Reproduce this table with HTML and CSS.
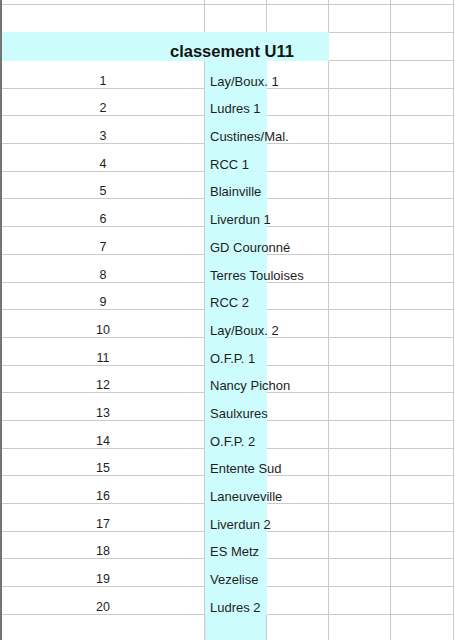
FILE: index.html
```html
<!DOCTYPE html>
<html lang="fr">
<head>
<meta charset="utf-8">
<title>classement U11</title>
<link rel="stylesheet" href="styles.css">
</head>
<body>
<div class="sheet">
  <div class="row r-top"><div class="c"></div><div class="c"></div><div class="c"></div><div class="c"></div><div class="c"></div></div>
  <div class="row r-blank"><div class="c"></div><div class="c"></div><div class="c"></div><div class="c"></div><div class="c"></div></div>
  <div class="row r-head"><div class="c title">classement U11</div><div class="c"></div><div class="c"></div></div>
  <div class="row r-data"><div class="c num">1</div><div class="c team">Lay/Boux. 1</div><div class="c"></div><div class="c"></div><div class="c"></div></div>
  <div class="row r-data"><div class="c num">2</div><div class="c team">Ludres 1</div><div class="c"></div><div class="c"></div><div class="c"></div></div>
  <div class="row r-data"><div class="c num">3</div><div class="c team">Custines/Mal.</div><div class="c"></div><div class="c"></div><div class="c"></div></div>
  <div class="row r-data"><div class="c num">4</div><div class="c team">RCC 1</div><div class="c"></div><div class="c"></div><div class="c"></div></div>
  <div class="row r-data"><div class="c num">5</div><div class="c team">Blainville</div><div class="c"></div><div class="c"></div><div class="c"></div></div>
  <div class="row r-data"><div class="c num">6</div><div class="c team">Liverdun 1</div><div class="c"></div><div class="c"></div><div class="c"></div></div>
  <div class="row r-data"><div class="c num">7</div><div class="c team">GD Couronné</div><div class="c"></div><div class="c"></div><div class="c"></div></div>
  <div class="row r-data"><div class="c num">8</div><div class="c team">Terres Touloises</div><div class="c"></div><div class="c"></div><div class="c"></div></div>
  <div class="row r-data"><div class="c num">9</div><div class="c team">RCC 2</div><div class="c"></div><div class="c"></div><div class="c"></div></div>
  <div class="row r-data"><div class="c num">10</div><div class="c team">Lay/Boux. 2</div><div class="c"></div><div class="c"></div><div class="c"></div></div>
  <div class="row r-data"><div class="c num">11</div><div class="c team">O.F.P. 1</div><div class="c"></div><div class="c"></div><div class="c"></div></div>
  <div class="row r-data"><div class="c num">12</div><div class="c team">Nancy Pichon</div><div class="c"></div><div class="c"></div><div class="c"></div></div>
  <div class="row r-data"><div class="c num">13</div><div class="c team">Saulxures</div><div class="c"></div><div class="c"></div><div class="c"></div></div>
  <div class="row r-data"><div class="c num">14</div><div class="c team">O.F.P. 2</div><div class="c"></div><div class="c"></div><div class="c"></div></div>
  <div class="row r-data"><div class="c num">15</div><div class="c team">Entente Sud</div><div class="c"></div><div class="c"></div><div class="c"></div></div>
  <div class="row r-data"><div class="c num">16</div><div class="c team">Laneuveville</div><div class="c"></div><div class="c"></div><div class="c"></div></div>
  <div class="row r-data"><div class="c num">17</div><div class="c team">Liverdun 2</div><div class="c"></div><div class="c"></div><div class="c"></div></div>
  <div class="row r-data"><div class="c num">18</div><div class="c team">ES Metz</div><div class="c"></div><div class="c"></div><div class="c"></div></div>
  <div class="row r-data"><div class="c num">19</div><div class="c team">Vezelise</div><div class="c"></div><div class="c"></div><div class="c"></div></div>
  <div class="row r-data"><div class="c num">20</div><div class="c team">Ludres 2</div><div class="c"></div><div class="c"></div><div class="c"></div></div>
  <div class="row r-last"><div class="c"></div><div class="c team empty"></div><div class="c"></div><div class="c"></div><div class="c"></div></div>
</div>
</body>
</html>
```

FILE: styles.css
```css
html, body {
  margin: 0;
  padding: 0;
  background: #ffffff;
}

body {
  font-family: "Liberation Sans", Arial, sans-serif;
  color: #1e1e1e;
  overflow: hidden;
}

.sheet {
  width: 454px;
  height: 640px;
  border-left: 2px solid #747474;
  box-sizing: border-box;
  overflow: hidden;
}

.row {
  display: grid;
  grid-template-columns: 203px 62px 62px 62px 63px;
}

.c {
  box-sizing: border-box;
  border-right: 1px solid #cbcbcb;
  border-bottom: 1px solid #cbcbcb;
  display: flex;
  align-items: flex-end;
  font-size: 12.5px;
  line-height: 13px;
  padding-bottom: 0;
  white-space: nowrap;
  min-width: 0;
}

.r-top { height: 5px; }
.r-blank { height: 28px; }
.r-head { height: 28px; }
.r-data { height: 27.7px; }
.r-last { height: 40px; }

.title {
  grid-column: span 3;
  background: #ccfcfc;
  border-right-color: #ccfcfc;
  border-bottom-color: #ccfcfc;
  margin-top: -1px;
  font-weight: bold;
  font-size: 16.5px;
  line-height: 18px;
  padding-left: 168px;
  padding-bottom: 0;
  color: #141414;
}

.num {
  justify-content: center;
}

.team {
  background: #ccfcfc;
  border-right-color: #ccfcfc;
  border-bottom-color: #ccfcfc;
  padding-left: 5px;
  font-size: 13px;
  overflow: visible;
}

.team.empty {
  border-bottom-color: #cbcbcb;
  border-right-color: #cbcbcb;
  border-left: 1px solid #d6e8e8;
}
```
